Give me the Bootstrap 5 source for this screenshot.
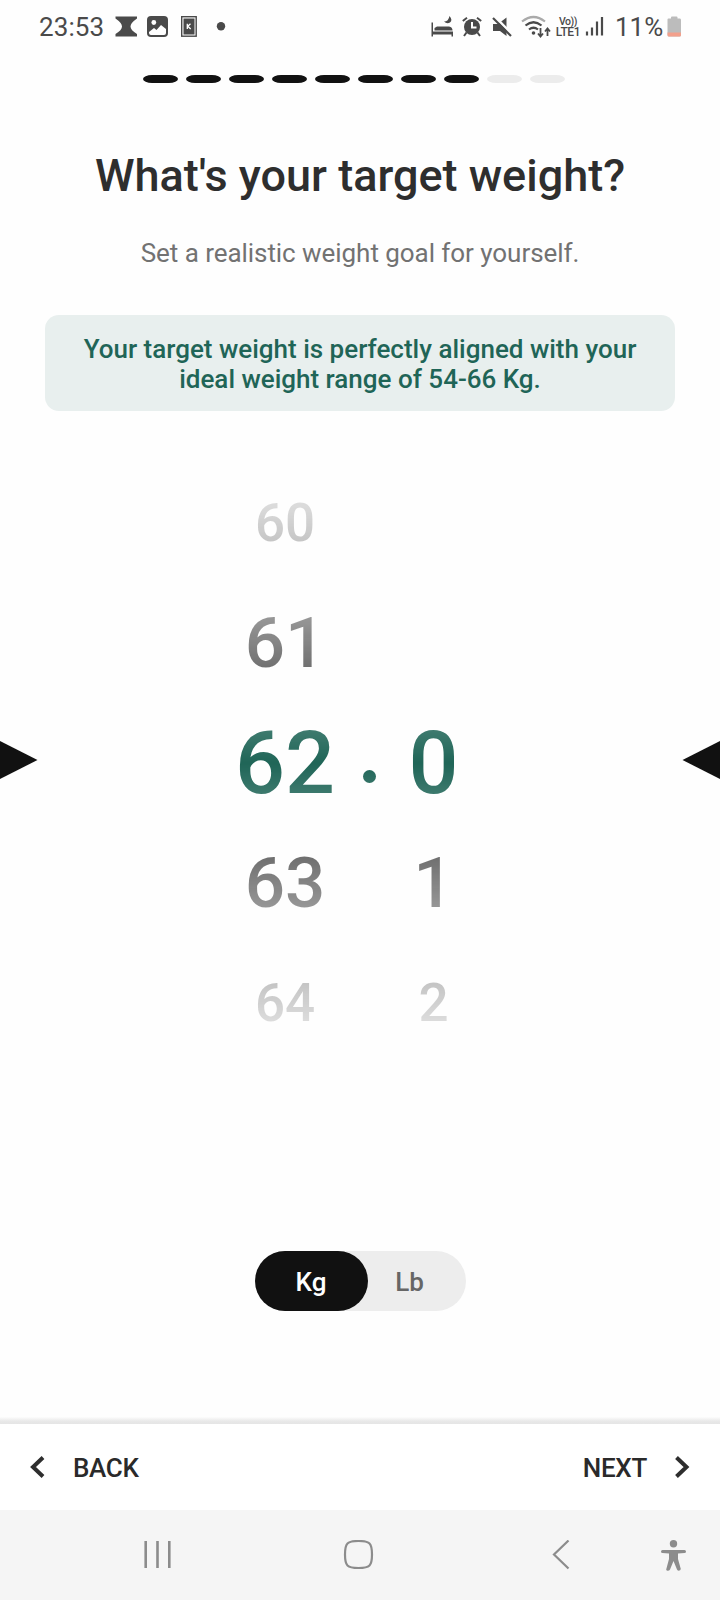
<!DOCTYPE html>
<html lang="en">
<head>
<meta charset="utf-8">
<meta name="viewport" content="width=device-width, initial-scale=1">
<title>Target weight</title>
<link href="https://cdn.jsdelivr.net/npm/bootstrap@5.3.0/dist/css/bootstrap.min.css" rel="stylesheet">
<style>
  body { font-family: Roboto, "Liberation Sans", sans-serif; background: #fefefe; color: #2e2e2e; font-size: 26px; }
  svg { display: block; flex: none; }
  .screen { width: 720px; height: 1600px; overflow: hidden; }
  .statusbar { height: 54px; padding: 0 38px 0 39px; color: #4a4a4a; }
  .clock { width: 76px; font-size: 26px; line-height: 54px; letter-spacing: .1px; white-space: nowrap; }
  .battery-text { width: 52px; margin-left: 11px; font-size: 26px; line-height: 54px; white-space: nowrap; }
  .volte { width: 26px; margin-left: 3px; font-size: 12px; line-height: 11px; font-weight: 500; letter-spacing: -.4px; }
  .volte-top { font-size: 10.5px; line-height: 11px; }
  .steps { margin: 21px 0 0 143px; gap: 8px; height: 8px; }
  .step { width: 35px; height: 8px; border-radius: 9px / 4px; background: #ececec; }
  .step-done { background: #111; }
  .title { font-size: 45px; line-height: 54px; font-weight: 500; margin-top: 66px; }
  .subtitle { font-size: 26px; line-height: 32px; letter-spacing: -.05px; color: #727272; margin-top: 34px; }
  .hint { margin: 46px 45px 0; height: 96px; padding-top: 19px; border-radius: 14px; background: #e8efee; color: #1f6557; font-weight: 500; line-height: 30px; }
  .picker { height: 600px; margin-top: 52px; }
  .wheels { width: 240px; margin-right: 30px;
    --fade: linear-gradient(#0000 0, rgba(0,0,0,.14) 40px, rgba(0,0,0,.24) 79px, rgba(0,0,0,.43) 154px, rgba(0,0,0,.6) 205px, rgba(0,0,0,.866) 269px, #000 300px, rgba(0,0,0,.866) 331px, rgba(0,0,0,.6) 395px, rgba(0,0,0,.43) 446px, rgba(0,0,0,.24) 521px, rgba(0,0,0,.14) 560px, #0000 600px);
    -webkit-mask-image: var(--fade); mask-image: var(--fade); }
  .wheel-int { width: 120px; }
  .wheel-point { width: 48px; }
  .wheel-dec { width: 72px; padding-left: 9px; }
  .tick { height: 120px; line-height: 120px; font-weight: 500; color: #111; }
  .tick-far { font-size: 53px; }
  .tick-near { font-size: 71px; }
  .tick-on { font-size: 88px; color: #1f6557; }
  .point { width: 13px; height: 13px; border-radius: 50%; background: #1f6557; margin-top: 27px; }
  .pointer { margin-top: -6px; }
  .units { width: 211px; height: 60px; margin-top: 188px; background: #ededed; border-radius: 30px; }
  .unit { line-height: 62px; font-weight: 500; color: #666; }
  .unit-on { width: 113px; background: #111; color: #fff; border-radius: 30px; }
  .unit-off { width: 84px; }
  .divider { height: 7px; margin-top: 106px; background: linear-gradient(#fdfdfd, #e8e8e8 60%, #e5e5e5); }
  .actions { height: 86px; background: #fff; padding: 0 30px; color: #2a2a2a; font-weight: 500; letter-spacing: -.3px; }
  .actions span { line-height: 88px; padding-top: 1px; }
  .sysnav { height: 90px; background: #f5f5f5; padding-left: 143px; }
  .nav-home { margin-left: 170px; }
  .nav-prev { margin-left: 178px; }
  .nav-access { margin-left: 91px; }
</style>
</head>
<body>
<main class="screen d-flex flex-column">

  <header class="statusbar d-flex align-items-center flex-shrink-0">
    <span class="clock">23:53</span>
    <svg width="23" height="22" viewBox="0 0 23 22"><path d="M.5 .5H22V2.500Q15.500 7 15.500 10.500T22 18V20.500H.5V18Q7 14 7 10.500T.5 2.500Z" fill="#4a4a4a"/></svg>
    <svg class="ms-2" width="22" height="22" viewBox="0 0 22 22"><rect x="1" y="0" width="21" height="21" rx="4" fill="#4a4a4a"/><circle cx="7.800" cy="6.500" r="2.400" fill="#fff"/><path d="M3 16L8 12L10.500 14L15 9L20 13V17Q20 19 18 19H5Q3 19 3 17Z" fill="#fff"/></svg>
    <svg class="ms-2" width="27" height="22" viewBox="0 0 27 22"><rect x="5.700" y=".7" width="14.500" height="19.500" fill="none" stroke="#4a4a4a" stroke-width="1.400"/><rect x="7.500" y="2.500" width="11" height="16" fill="#4a4a4a"/><path d="M11.300 7.800V13M14.500 7.800L11.800 10.300L14.700 13" fill="none" stroke="#fff" stroke-width="1.300"/></svg>
    <svg class="ms-2" width="20" height="20" viewBox="0 0 20 20"><circle cx="10" cy="9.300" r="4.200" fill="#4a4a4a"/></svg>

    <div class="d-flex align-items-center ms-auto">
      <svg width="23" height="22" viewBox="0 0 23 22" fill="#4a4a4a"><path d="M.5 6.500H2V15.500H22V20.500H20.500V18.500H2V20.500H.5Z"/><path d="M3.500 14.500V12L6 10.500H18Q21.500 11 21.500 14.500Z"/><path d="M18.500 0Q22 4 19 6.500Q16 8.500 13 5.500Q17.500 5.500 18.500 0Z"/></svg>
      <svg class="ms-2" width="20" height="20" viewBox="0 0 20 20"><circle cx="10" cy="10" r="8" fill="#4a4a4a"/><path d="M.8 4L5 .8M19.200 4L15 .8M4.500 15.500L2 19M15.500 15.500L18 19" stroke="#4a4a4a" stroke-width="2"/><path d="M10 5V10.500H14.500" fill="none" stroke="#fff" stroke-width="2"/></svg>
      <svg style="margin-left:10px" width="21" height="20" viewBox="0 0 21 20"><path d="M1 7H6L14.500 .5V19L8 14H6L4 14H1Z" fill="#4a4a4a"/><path d="M3.200 0L21 18" stroke="#fefefe" stroke-width="2.500"/><path d="M1 1L19 19" stroke="#4a4a4a" stroke-width="2.200"/></svg>
      <svg class="ms-2" width="31" height="24" viewBox="0 0 31 24" fill="none" stroke="#4a4a4a" stroke-width="2.200"><path d="M1 6.500Q12.500-2.500 24 6.500" stroke="#aaa"/><path d="M4.500 10.500Q12.500 4 20.500 10.500M8 14.500Q12.500 11 17 14.500"/><circle cx="12.500" cy="18" r="1.800" fill="#4a4a4a" stroke="none"/><path d="M19.500 13V21M17 18.500L19.500 21.500L22 18.500M26.500 21V14M24 16.500L26.500 13.500L29 16.500" stroke-width="1.800"/></svg>
      <div class="volte text-center"><div class="volte-top">Vo))</div><div>LTE1</div></div>
      <svg style="margin-left:4px" width="19" height="20" viewBox="0 0 19 20" stroke="#4a4a4a" stroke-width="2.200"><path d="M2 14.500V18.500M7 10.500V18.500M12 4.500V18.500M17 0V18.500"/></svg>
      <span class="battery-text">11%</span>
      <svg width="15" height="22" viewBox="0 0 15 22"><path d="M.5 3.500Q.5 2.500 1.500 2.500H4V1.500Q4 .5 5 .5H9.500Q10.500 .5 10.500 1.500V2.500H13Q14 2.500 14 4V19Q14 20.500 12.500 20.500H2Q.5 20.500 .5 19Z" fill="#bcbcbc"/><path d="M.5 16.500H14V19Q14 20.500 12.500 20.500H2Q.5 20.500 .5 19Z" fill="#f3a08c"/></svg>
    </div>
  </header>

  <div class="steps d-flex flex-shrink-0">
    <div class="step step-done"></div><div class="step step-done"></div><div class="step step-done"></div><div class="step step-done"></div><div class="step step-done"></div><div class="step step-done"></div><div class="step step-done"></div><div class="step step-done"></div><div class="step"></div><div class="step"></div>
  </div>

  <h1 class="title text-center mb-0">What's your target weight?</h1>
  <p class="subtitle text-center mb-0">Set a realistic weight goal for yourself.</p>
  <div class="hint text-center flex-shrink-0">Your target weight is perfectly aligned with your<br>ideal weight range of 54-66 Kg.</div>

  <section class="picker d-flex align-items-center justify-content-between flex-shrink-0">
    <svg class="pointer" width="38" height="38" viewBox="0 0 38 38"><path d="M0 0L37.500 19L0 38Z" fill="#111"/></svg>
    <div class="wheels d-flex text-center">
      <div class="wheel-int">
        <div class="tick tick-far">60</div><div class="tick tick-near">61</div><div class="tick tick-on">62</div><div class="tick tick-near">63</div><div class="tick tick-far">64</div>
      </div>
      <div class="wheel-point d-flex align-items-center justify-content-center"><div class="point"></div></div>
      <div class="wheel-dec">
        <div class="tick"></div><div class="tick"></div><div class="tick tick-on">0</div><div class="tick tick-near">1</div><div class="tick tick-far">2</div>
      </div>
    </div>
    <svg class="pointer" width="38" height="38" viewBox="0 0 38 38"><path d="M38 0L.5 19L38 38Z" fill="#111"/></svg>
  </section>

  <div class="units d-flex mx-auto flex-shrink-0 text-center">
    <div class="unit unit-on">Kg</div>
    <div class="unit unit-off">Lb</div>
  </div>

  <div class="divider flex-shrink-0"></div>
  <nav class="actions d-flex align-items-center justify-content-between flex-shrink-0">
    <div class="d-flex align-items-center">
      <svg width="16" height="22" viewBox="0 0 16 22"><path d="M13 1.500L3 11L13 20.500" fill="none" stroke="#2e2e2e" stroke-width="4"/></svg>
      <span style="margin-left:27px">BACK</span>
    </div>
    <div class="d-flex align-items-center">
      <span style="margin-right:27px">NEXT</span>
      <svg width="16" height="22" viewBox="0 0 16 22"><path d="M2.500 1.500L12.500 11L2.500 20.500" fill="none" stroke="#2e2e2e" stroke-width="4"/></svg>
    </div>
  </nav>

  <div class="sysnav d-flex align-items-center flex-shrink-0">
    <svg width="30" height="30" viewBox="0 0 30 30" stroke="#8c8c8c" stroke-width="2.600"><path d="M2.700 1V28M14.500 1V28M26.300 1V28"/></svg>
    <svg class="nav-home" width="31" height="30" viewBox="0 0 31 30"><path d="M15.500 1Q24 1 26.500 3.500T29 14.500Q29 23 26.500 25.500T15.500 28Q7 28 4.500 25.500T2 14.500Q2 6 4.500 3.500T15.500 1Z" fill="none" stroke="#8c8c8c" stroke-width="2.200"/></svg>
    <svg class="nav-prev" width="18" height="30" viewBox="0 0 18 30"><path d="M16.500 .5L2 14.500L16.500 28.500" fill="none" stroke="#8c8c8c" stroke-width="2.200"/></svg>
    <svg class="nav-access" width="27" height="32" viewBox="0 0 27 32" fill="#8c8c8c"><circle cx="12.500" cy="4.700" r="3.700"/><path d="M1.500 11H23.500Q25 11 25 12.500T23.500 14L17 14.500V20L19.800 30Q19.500 31.800 17.500 31.800Q16.300 31.600 16 30.600L12.500 22L9 30.600Q8.500 31.800 6.500 31.800Q5 31.600 5.200 30.600L8 20V14.500L1.500 14Q0 14 0 12.500T1.500 11Z"/></svg>
  </div>
</main>
<script src="https://cdn.jsdelivr.net/npm/bootstrap@5.3.0/dist/js/bootstrap.bundle.min.js"></script>
</body>
</html>
